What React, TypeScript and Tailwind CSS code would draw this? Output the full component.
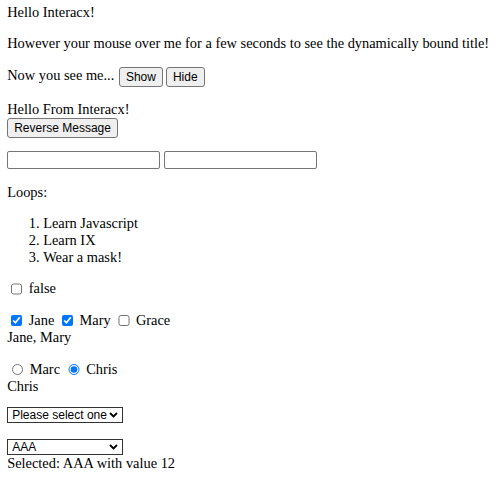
import React, { useState } from 'react';

const sans = "[font-family:Arial,'Liberation_Sans',sans-serif]";
const btn =
  `bg-[#efefef] border border-[#767676] rounded-[3px] px-[6px] py-[1px] leading-[16px] text-[12px] text-black ${sans} align-middle`;
const box = 'w-[11.7px] h-[11.7px] my-[2.7px] mr-[2.7px] align-[-1px] accent-[#0075ff]';

const Chevron = () => (
  <svg width="9" height="6" viewBox="0 0 9 6" className="shrink-0">
    <path d="M1 1l3.5 3.5L8 1" fill="none" stroke="#000" strokeWidth="1.8" />
  </svg>
);

const Select = ({ label, value }: { label: string; value: string }) => (
  <span className="inline-flex items-center w-[116px] h-[16px] border border-[#333] bg-white pl-[4px] pr-[4px] align-middle">
    <select
      defaultValue={value}
      className={`appearance-none flex-1 min-w-0 text-[12px] leading-[14px] text-black outline-none ${sans}`}
    >
      <option value={value}>{label}</option>
    </select>
    <Chevron />
  </span>
);

const App = () => {
  const [names, setNames] = useState<string[]>(['Jane', 'Mary']);
  const [pick, setPick] = useState('Chris');
  const toggle = (n: string) =>
    setNames(names.includes(n) ? names.filter((x) => x !== n) : [...names, n]);

  return (
    <div className="p-[7.2px] pt-[4px] text-[14.4px] text-black bg-white min-h-screen [font-family:'Liberation_Serif','Times_New_Roman',serif] leading-[17px]">
      <div>Hello Interacx!</div>
      <p className="my-[14.4px]">
        However your mouse over me for a few seconds to see the dynamically bound title!
      </p>
      <p className="my-[14.4px]">
        Now you see me... <button className={btn + ' ml-[1px] mr-[3px]'}>Show</button>
        <button className={btn}>Hide</button>
      </p>
      <div>Hello From Interacx!</div>
      <button className={btn}>Reverse Message</button>
      <p className="mt-[13px] mb-[14.4px] flex gap-[4px]">
        <input className="w-[153px] h-[18px] border border-[#767676] rounded-[2px] bg-white" />
        <input className="w-[153px] h-[18px] border border-[#767676] rounded-[2px] bg-white" />
      </p>
      <p className="my-[14.4px]">Loops:</p>
      <ol className="mt-[13.4px] mb-[14.4px] pl-[36px] list-decimal">
        <li>Learn Javascript</li>
        <li>Learn IX</li>
        <li>Wear a mask!</li>
      </ol>
      <p className="my-[14.4px]">
        <input type="checkbox" className={box + ' ml-[3.6px]'} /> false
      </p>
      <div className="mt-[14.4px]">
        {['Jane', 'Mary', 'Grace'].map((n) => (
          <span key={n}>
            <input
              type="checkbox"
              checked={names.includes(n)}
              onChange={() => toggle(n)}
              className={box + ' ml-[3.6px]'}
            />{' '}
            {n}{' '}
          </span>
        ))}
      </div>
      <div>{names.join(', ')}</div>
      <div className="mt-[14.4px]">
        {['Marc', 'Chris'].map((n) => (
          <span key={n}>
            <input
              type="radio"
              name="who"
              checked={pick === n}
              onChange={() => setPick(n)}
              className={box + ' ml-[4.5px]'}
            />{' '}
            {n}{' '}
          </span>
        ))}
      </div>
      <div>{pick}</div>
      <p className="mt-[10.4px] mb-[14.4px]">
        <Select label="Please select one" value="" />
      </p>
      <div>
        <Select label="AAA" value="12" />
      </div>
      <div>Selected: AAA with value 12</div>
    </div>
  );
};

export default App;
